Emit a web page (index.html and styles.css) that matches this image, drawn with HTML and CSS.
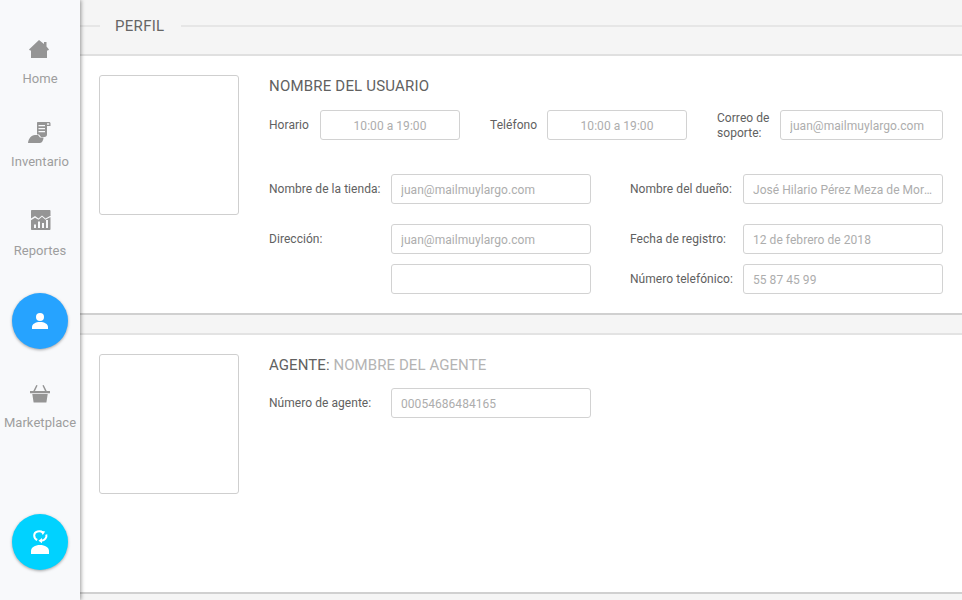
FILE: index.html
```html
<!DOCTYPE html>
<html lang="en">
<head>
  <meta charset="UTF-8">
  <title>Perfil</title>
  <link rel="stylesheet" href="styles.css">
</head>
<body>
  <nav class="sidebar">
    <a class="nav-item nav-home">
      <svg class="nav-icon" viewBox="0 0 24 24"><path d="M11 3l5 4V5h2.500v4.500l2.500 3-1 1h-1V21H3v-7.500H2l-1-1z"/></svg>
      <span>Home</span>
    </a>
    <a class="nav-item nav-stock">
      <svg class="nav-icon" viewBox="0 0 24 24">
        <path fill-rule="evenodd" d="M10 2h11c1 0 1.500.7 1.500 1.500V6H19v8.500c0 1.500-1 2.500-2.500 2.500H13l-2-2.500H9V3c0-.6.4-1 1-1zm.5 3v1.300H17V5zm0 3v1.300H17V8zm0 3v1.300H17V11zM19 3.300v1.400h2.200V3.300z"/>
        <path d="M0 23c.5-4 3-8 7-8h3l2 2.500h3.500c0 2.500-1.500 5.500-3.500 5.500z"/>
      </svg>
      <span>Inventario</span>
    </a>
    <a class="nav-item nav-reports">
      <svg class="nav-icon" viewBox="0 0 24 24"><path fill-rule="evenodd" d="M4 2h17.500c.6 0 1 .4 1 1v18c0 .6-.4 1-1 1H4c-.6 0-1-.4-1-1V3c0-.6.4-1 1-1zM3 10.500v1.800l4-2.500 3.500 2 3.500-3 3.500 3 5-2.700V7.800l-5 2.700-3.500-3-3.500 3L7 8zM6 16.500V20h2v-3.500zm4-3V20h2v-6.500zm4 1.500v5h2v-5zm4-3v8h2v-8z"/></svg>
      <span>Reportes</span>
    </a>
    <a class="round-btn round-profile">
      <svg class="round-icon" viewBox="0 0 16 16"><circle cx="8" cy="4" r="4"/><path d="M0 16v-2c0-3 3.500-5 8-5s8 2 8 5v2z"/></svg>
    </a>
    <a class="nav-item nav-market">
      <svg class="nav-icon" viewBox="0 0 24 24"><path d="M8.300 3l1.300.6L7 9H5.300zM15.700 3l-1.300.6L17 9h1.700zM2 9h20v2.300H2zM4.300 12h15.400l-1.300 8.500H5.600z"/></svg>
      <span>Marketplace</span>
    </a>
    <a class="round-btn round-support">
      <svg class="round-icon round-icon-lg" viewBox="0 0 18 24">
        <path class="hair" d="M12 2.500C9 .3 3.200 1 3.200 5.500c0 2 1 3.500 3 4.500"/>
        <path d="M9.500 .8l4.700.6-2.500 3.700z"/>
        <path class="hair" d="M15.300 4.500c.8 3.200-1.500 6-5 6.200"/>
        <path d="M11 8l-3.500 2.700 3.500 2.600z"/>
        <path d="M0 24v-3c0-3.500 4-6 9-6s9 2.500 9 6v3z"/>
      </svg>
    </a>
  </nav>

  <main class="content">
    <header class="page-head">
      <span class="page-rule page-rule-short"></span>
      <h1>PERFIL</h1>
      <span class="page-rule"></span>
    </header>

    <section class="card">
      <div class="photo"></div>
      <div class="info">
        <h2>NOMBRE DEL USUARIO</h2>
        <div class="row row-top">
          <label class="label label-horario">Horario</label>
          <input class="field field-short center" value="10:00 a 19:00" readonly>
          <label class="label label-tel">Teléfono</label>
          <input class="field field-short center" value="10:00 a 19:00" readonly>
          <label class="label label-mail">Correo de soporte:</label>
          <input class="field field-mail" value="juan@mailmuylargo.com" readonly>
        </div>
        <div class="row row-store">
          <label class="label label-left">Nombre de la tienda:</label>
          <input class="field field-wide" value="juan@mailmuylargo.com" readonly>
          <label class="label label-right">Nombre del dueño:</label>
          <input class="field field-wide" value="José Hilario Pérez Meza de Moreno Valle" readonly>
        </div>
        <div class="row row-address">
          <label class="label label-left">Dirección:</label>
          <input class="field field-wide" value="juan@mailmuylargo.com" readonly>
          <label class="label label-right">Fecha de registro:</label>
          <input class="field field-wide" value="12 de febrero de 2018" readonly>
        </div>
        <div class="row row-phone">
          <span class="label label-left"></span>
          <input class="field field-wide" readonly>
          <label class="label label-right">Número telefónico:</label>
          <input class="field field-wide" value="55 87 45 99" readonly>
        </div>
      </div>
    </section>

    <section class="card card-agent">
      <div class="photo"></div>
      <div class="info">
        <h2>AGENTE: <span class="muted">NOMBRE DEL AGENTE</span></h2>
        <div class="row row-top">
          <label class="label label-left">Número de agente:</label>
          <input class="field field-wide" value="00054686484165" readonly>
        </div>
      </div>
    </section>
  </main>
</body>
</html>
```

FILE: styles.css
```css
* {
  box-sizing: border-box;
}

html, body {
  height: 100%;
}

body {
  margin: 0;
  display: flex;
  height: 600px;
  overflow: hidden;
  font-family: Roboto, "Liberation Sans", sans-serif;
  background-color: #f5f5f5;
}

/* Sidebar */
.sidebar {
  width: 80px;
  flex-shrink: 0;
  display: flex;
  flex-direction: column;
  align-items: center;
  background-color: #f8f9fb;
  box-shadow: 1px 0 4px rgba(0, 0, 0, 0.4);
  position: relative;
  z-index: 2;
}

.nav-item {
  display: flex;
  flex-direction: column;
  align-items: center;
  color: #9e9e9e;
  font-size: 13px;
  line-height: 15px;
  letter-spacing: 0.05px;
  white-space: nowrap;
}

.nav-icon {
  width: 24px;
  height: 24px;
  fill: #959595;
  margin-bottom: 9px;
}

.nav-home {
  margin-top: 37px;
}
.nav-home .nav-icon {
  margin-bottom: 10px;
}
.nav-stock {
  margin-top: 34px;
}
.nav-stock .nav-icon {
  margin-bottom: 10px;
}
.nav-reports {
  margin-top: 39px;
}
.nav-reports .nav-icon {
  margin-bottom: 11px;
}
.nav-market {
  margin-top: 33px;
}

.round-btn {
  width: 56px;
  height: 56px;
  flex-shrink: 0;
  border-radius: 50%;
  display: flex;
  align-items: center;
  justify-content: center;
  box-shadow: 0 1px 3px rgba(0, 0, 0, 0.35);
}

.round-profile {
  margin-top: 35px;
  background-color: #26a3ff;
}

.round-support {
  margin-top: 84px;
  background-color: #00d2ff;
}

.round-icon {
  width: 16px;
  height: 16px;
  fill: #fff;
}

.round-icon-lg {
  width: 18px;
  height: 24px;
}

.hair {
  fill: none;
  stroke: #fff;
  stroke-width: 2;
}

/* Main area */
.content {
  flex: 1;
  min-width: 0;
}

.page-head {
  height: 56px;
  display: flex;
  align-items: center;
  padding-bottom: 2px;
  border-bottom: 2px solid #e0e0e0;
}

.page-head h1 {
  margin: 0 17px 0 15px;
  font-size: 15px;
  font-weight: 400;
  letter-spacing: 0.3px;
  color: #666;
}

.page-rule {
  flex: 1;
  height: 2px;
  background-color: #e6e6e6;
}

.page-rule-short {
  flex: none;
  width: 20px;
}

.card {
  height: 259px;
  display: flex;
  gap: 30px;
  padding: 19px 19px 0;
  background-color: #fff;
  border-bottom: 2px solid #d0d0d0;
}

.card-agent {
  height: 261px;
  margin-top: 18px;
  border-top: 2px solid #e3e3e3;
  padding-top: 19px;
}

.photo {
  width: 140px;
  height: 140px;
  flex-shrink: 0;
  border: 1px solid #cfcfcf;
  border-radius: 3px;
}

.info {
  flex: 1;
  min-width: 0;
}

.info h2 {
  margin: 2px 0 15px;
  font-size: 15px;
  line-height: 18px;
  font-weight: 400;
  letter-spacing: 0.2px;
  color: #616161;
}

.card-agent h2 {
  margin-bottom: 14px;
  letter-spacing: 0.08px;
}

.muted {
  color: #b4b4b4;
}

.row {
  display: flex;
  height: 30px;
  margin-bottom: 10px;
}

.row-top {
  margin-bottom: 34px;
}

.row-store {
  margin-bottom: 20px;
}

.label {
  font-size: 12px;
  line-height: 15px;
  padding-top: 8px;
  letter-spacing: 0.05px;
  color: #616161;
  flex-shrink: 0;
}

.label-left {
  width: 122px;
}

.label-right {
  width: 113px;
  margin-left: 39px;
}

.label-horario {
  width: 51px;
}

.label-tel {
  width: 57px;
  margin-left: 30px;
}

.label-mail {
  width: 63px;
  margin-left: 30px;
  margin-top: -7px;
}

.field {
  height: 30px;
  padding: 1px 9px 0;
  border: 1px solid #d2d2d2;
  border-radius: 3px;
  background-color: #fff;
  color: #adadad;
  font-family: inherit;
  font-size: 12px;
  letter-spacing: 0.05px;
  text-overflow: ellipsis;
  outline: none;
}

.field-short {
  width: 140px;
}

.field-mail {
  width: 163px;
}

.field-wide {
  width: 200px;
}

.center {
  text-align: center;
}
```
